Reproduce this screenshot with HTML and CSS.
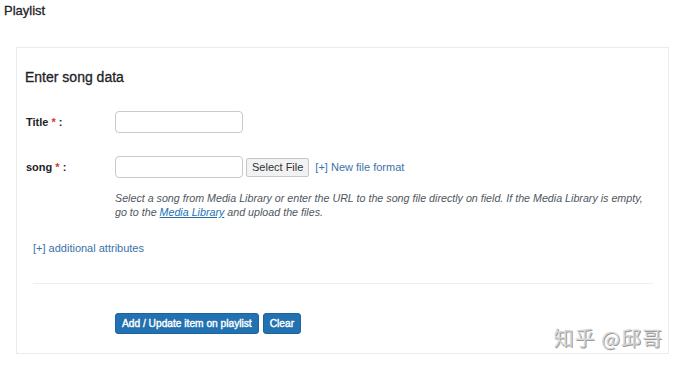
FILE: index.html
```html
<!DOCTYPE html>
<html lang="en">
<head>
    <meta charset="UTF-8">
    <meta name="viewport" content="width=device-width, initial-scale=1.0">
    <title>Playlist</title>
    <link rel="stylesheet" href="styles.css">
</head>
<body>
    <h1 class="page-title">Playlist</h1>
    <div class="card">
        <h2>Enter song data</h2>
        <form id="songForm">
            <div class="row row-title">
                <label for="title">Title <span class="req">*</span> :</label>
                <input type="text" id="title" class="text-input">
            </div>
            <div class="row row-song">
                <label for="song">song <span class="req">*</span> :</label>
                <div class="field">
                    <input type="text" id="song" class="text-input">
                    <button type="button" class="btn-file">Select File</button>
                    <a href="#" class="link">[+] New file format</a>
                </div>
            </div>
            <p class="description">Select a song from Media Library or enter the URL to the song file directly on field. If the Media Library is empty, go to the <a href="#">Media Library</a> and upload the files.</p>
            <a href="#" class="link more">[+] additional attributes</a>
            <hr>
            <div class="actions">
                <button type="button" class="btn-primary">Add / Update item on playlist</button>
                <button type="button" class="btn-primary">Clear</button>
            </div>
        </form>
        <div class="watermark">知乎 @邱哥</div>
    </div>
</body>
</html>
```

FILE: styles.css
```css
body {
    margin: 0;
    font-family: "Liberation Sans", Arial, sans-serif;
    color: #1d2327;
    background: #fff;
}
.page-title {
    margin: 0;
    padding: 4px 4px;
    font-size: 13px;
    font-weight: normal;
    line-height: 14px;
    -webkit-text-stroke: 0.3px #1d2327;
}
.card {
    position: relative;
    box-sizing: border-box;
    width: 653px;
    margin: 25px 0 0 16px;
    padding: 21px 15px 19px 8px;
    border: 1px solid #ebebeb;
    background: #fff;
}
h2 {
    margin: 0;
    font-size: 14px;
    font-weight: normal;
    line-height: 16px;
    -webkit-text-stroke: 0.3px #1d2327;
}
.row {
    display: grid;
    grid-template-columns: 89px 1fr;
    align-items: center;
    margin-left: 1px;
}
.row-title {
    margin-top: 26px;
}
.row-song {
    margin-top: 23px;
}
label {
    font-size: 11px;
    font-weight: bold;
}
.req {
    color: #d63638;
}
.field {
    display: flex;
    align-items: center;
}
.text-input {
    box-sizing: border-box;
    width: 128px;
    height: 22px;
    margin: 0;
    border: 1px solid #c9c9c9;
    border-radius: 4px;
    background: #fff;
}
.btn-file {
    height: 19px;
    margin-left: 3px;
    padding: 0 5px;
    font-family: inherit;
    font-size: 11px;
    color: #2c3338;
    background: #f2f2f2;
    border: 1px solid #c7c7c7;
    border-radius: 2px;
}
.link {
    color: #3b72aa;
    font-size: 11px;
    text-decoration: none;
}
.field .link {
    margin-left: 6px;
}
.description {
    margin: 13px -4px 0 90px;
    font-size: 10.7px;
    line-height: 14px;
    font-style: italic;
    color: #50575e;
}
.description a {
    color: #2271b1;
}
.more {
    display: block;
    margin: 22px 0 0 8px;
    line-height: 14px;
}
hr {
    margin: 28px 0 0 8px;
    border: 0;
    border-top: 1px solid #efefef;
}
.actions {
    display: flex;
    gap: 4px;
    margin: 29px 0 0 90px;
}
.btn-primary {
    height: 21px;
    padding: 0 6px;
    font-family: inherit;
    font-size: 10.2px;
    font-weight: normal;
    color: #fff;
    -webkit-text-stroke: 0.4px #fff;
    background: #2271b1;
    border: 1px solid #1d63a0;
    border-radius: 3px;
}
.watermark {
    position: absolute;
    right: 5px;
    bottom: 1px;
    font-family: "Noto Sans CJK SC", sans-serif;
    font-size: 20px;
    letter-spacing: 1px;
    color: #d6d6d6;
    text-shadow: 1px 1px 0 #9a9a9a;
}
```
